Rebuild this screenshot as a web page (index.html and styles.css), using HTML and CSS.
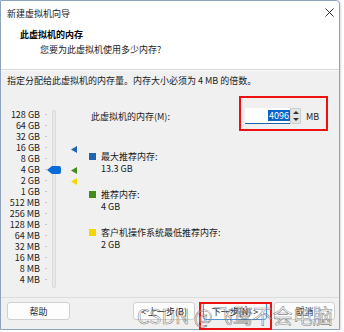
FILE: index.html
```html
<!DOCTYPE html>
<html lang="zh-CN">
<head>
  <meta charset="UTF-8" />
  <title>新建虚拟机向导</title>
  <link rel="stylesheet" href="styles.css">
</head>
<body>
  <div class="window">
    <div class="titlebar">
      <span>新建虚拟机向导</span>
      <svg class="close" width="9" height="9" viewBox="0 0 9 9"><path d="M0.5 0.5L8.5 8.5M8.5 0.5L0.5 8.5" stroke="#333" stroke-width="1" fill="none"/></svg>
    </div>

    <div class="header">
      <div class="heading">此虚拟机的内存</div>
      <div class="sub">您要为此虚拟机使用多少内存?</div>
    </div>

    <div class="content">
      <p class="intro">指定分配给此虚拟机的内存量。内存大小必须为 4 MB 的倍数。</p>

      <div class="main">
        <ul class="labels">
          <li>128 GB</li>
          <li>64 GB</li>
          <li>32 GB</li>
          <li>16 GB</li>
          <li>8 GB</li>
          <li>4 GB</li>
          <li>2 GB</li>
          <li>1 GB</li>
          <li>512 MB</li>
          <li>256 MB</li>
          <li>128 MB</li>
          <li>64 MB</li>
          <li>32 MB</li>
          <li>16 MB</li>
          <li>8 MB</li>
          <li>4 MB</li>
        </ul>

        <!-- 슬라이더 -->
        <div class="slider">
          <div class="track"></div>
          <div class="thumb"></div>
          <div class="pin pin-max"></div>
          <div class="pin pin-rec"></div>
          <div class="pin pin-min"></div>
        </div>

        <div class="info">
          <div class="mem-row">
            <span class="mem-label">此虚拟机的内存(M):</span>
            <div class="spin">
              <div class="field"><span class="sel">4096</span></div>
              <div class="arrows">
                <span class="up"></span>
                <span class="down"></span>
              </div>
            </div>
            <span class="unit">MB</span>
          </div>

          <div class="legend">
            <div class="item">
              <span class="swatch blue"></span>
              <div>
                <div>最大推荐内存:</div>
                <div>13.3 GB</div>
              </div>
            </div>
            <div class="item">
              <span class="swatch green"></span>
              <div>
                <div>推荐内存:</div>
                <div>4 GB</div>
              </div>
            </div>
            <div class="item">
              <span class="swatch yellow"></span>
              <div>
                <div>客户机操作系统最低推荐内存:</div>
                <div>2 GB</div>
              </div>
            </div>
          </div>
        </div>
      </div>
    </div>

    <div class="footer">
      <button class="btn help">帮助</button>
      <button class="btn back">&lt; 上一步(B)</button>
      <button class="btn next">下一步(N) &gt;</button>
      <button class="btn cancel">取消</button>
    </div>

    <!-- 빨간 표시 -->
    <div class="mark mark-mem"></div>
    <div class="mark mark-next"></div>
    <div class="watermark">CSDN @飞鹜不会电脑</div>
  </div>
</body>
</html>
```

FILE: styles.css
```css
body {
  margin: 0;
  background-color: #ffffff;
  font-family: "Noto Sans CJK SC", "Noto Sans", sans-serif;
  font-size: 9px;
  color: #1a1a1a;
}

.window {
  position: relative;
  width: 340px;
  height: 330px;
  box-sizing: border-box;
  border: 1px solid #8ea4bf;
  border-top-right-radius: 4px;
  display: flex;
  flex-direction: column;
  background-color: #f0f0f0;
  box-shadow: 1px 1px 2px rgba(0, 0, 0, 0.15);
}

.titlebar {
  height: 22px;
  display: flex;
  align-items: center;
  justify-content: space-between;
  padding: 1px 5px 0 6px;
  background-color: #ffffff;
  border-top-right-radius: 4px;
}

.close {
  margin-top: -1px;
}

.header {
  height: 42px;
  padding-top: 3px;
  background-color: #ffffff;
  border-bottom: 1px solid #d7d7d7;
  line-height: 15px;
}

.heading {
  padding-left: 19px;
  font-weight: bold;
  color: #000;
}

.sub {
  padding-left: 39px;
}

.content {
  flex: 1;
  border-top: 1px solid #fbfbfb;
}

.intro {
  margin: 0;
  padding: 2px 0 0 6px;
  line-height: 15px;
}

.main {
  display: flex;
  margin-top: 21px;
}

.labels {
  list-style: none;
  margin: 0;
  padding: 0 0 0 5px;
}

.labels li {
  display: flex;
  justify-content: flex-end;
  align-items: center;
  gap: 5px;
  width: 41px;
  height: 11px;
  line-height: 11px;
  color: #222;
}

.labels li::after {
  content: "";
  width: 2px;
  height: 1px;
  background-color: #c4c4c4;
}

.slider {
  position: relative;
  width: 41px;
  height: 177px;
}

.track {
  position: absolute;
  left: 5px;
  top: 1px;
  width: 2px;
  height: 176px;
  background-color: #e8e8e8;
  border: 1px solid #dadada;
  border-radius: 2px;
}

.thumb {
  position: absolute;
  left: 0;
  top: 57px;
  width: 14px;
  height: 8px;
  background-color: #0a6cd6;
  clip-path: polygon(0 50%, 35% 0, 100% 0, 100% 100%, 35% 100%);
  border-radius: 0 2px 2px 0;
}

.pin {
  position: absolute;
  left: 24px;
  width: 6px;
  height: 7px;
  clip-path: polygon(0 50%, 100% 0, 100% 100%);
}

.pin-max { top: 37px; background-color: #1f64ad; }
.pin-rec { top: 58px; background-color: #3e8d1d; }
.pin-min { top: 69px; background-color: #f6d500; }

.info {
  flex: 1;
  padding-left: 1px;
}

.mem-row {
  display: flex;
  align-items: center;
  height: 16px;
  margin-top: -1px;
}

.mem-label {
  width: 154px;
  padding-left: 2px;
}

.spin {
  display: flex;
  height: 16px;
}

.field {
  width: 45px;
  height: 15px;
  background-color: #ffffff;
  border-bottom: 1px solid #1a62b8;
  display: flex;
  justify-content: flex-end;
  align-items: center;
}

.sel {
  background-color: #0a64c8;
  color: #ffffff;
  line-height: 11px;
  padding: 0 1px;
}

.arrows {
  width: 11px;
  display: flex;
  flex-direction: column;
  background-color: #e3e3e3;
  border: 1px solid #d0d0d0;
  box-sizing: border-box;
}

.arrows span {
  flex: 1;
  display: flex;
  align-items: center;
  justify-content: center;
}

.arrows .up::after,
.arrows .down::after {
  content: "";
  border-left: 3px solid transparent;
  border-right: 3px solid transparent;
}

.arrows .up::after { border-bottom: 3px solid #333; }
.arrows .down::after { border-top: 3px solid #333; }

.unit {
  margin-left: 5px;
}

.legend {
  display: flex;
  flex-direction: column;
  gap: 14px;
  margin-top: 27px;
  line-height: 12px;
}

.item {
  display: flex;
  gap: 5px;
}

.swatch {
  width: 7px;
  height: 7px;
  margin-top: 2px;
}

.swatch.blue { background-color: #1f64ad; }
.swatch.green { background-color: #3e8d1d; }
.swatch.yellow { background-color: #f6d500; }

.footer {
  height: 27px;
  border-top: 1px solid #dcdcdc;
  display: flex;
  align-items: flex-start;
  padding: 4px 0 0 6px;
}

.btn {
  height: 18px;
  padding: 0;
  font-family: inherit;
  font-size: 9px;
  color: #1a1a1a;
  background-color: #fdfdfd;
  border: 1px solid #d0d0d0;
  border-radius: 3px;
}

.help { width: 63px; margin-right: 63px; }
.back { width: 62px; margin-right: 8px; }
.next { width: 64px; margin-right: 7px; border-color: #4f93d8; }
.cancel { width: 61px; }

.mark {
  position: absolute;
  border: 2px solid #ee1111;
  box-sizing: border-box;
}

.mark-mem {
  left: 238px;
  top: 95px;
  width: 89px;
  height: 35px;
}

.mark-next {
  left: 198px;
  top: 301px;
  width: 73px;
  height: 28px;
}

.watermark {
  position: absolute;
  left: 136px;
  top: 301px;
  font-size: 20px;
  line-height: 28px;
  color: rgba(255, 255, 255, 0.4);
  -webkit-text-stroke: 0.6px rgba(80, 80, 80, 0.7);
  white-space: nowrap;
}
```
